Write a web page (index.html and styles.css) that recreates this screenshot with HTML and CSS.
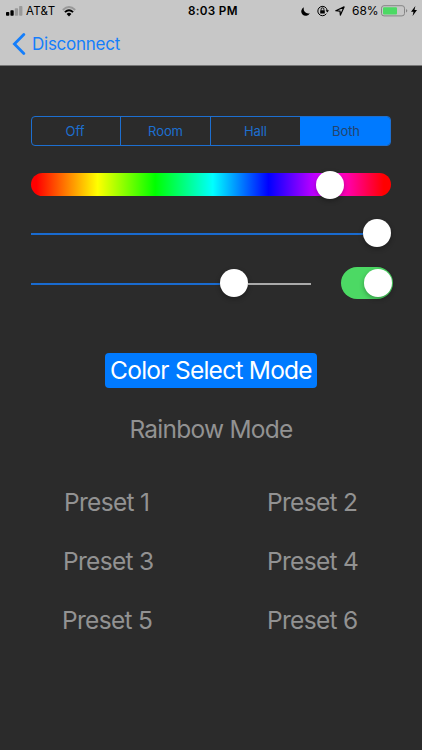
FILE: index.html
```html
<!DOCTYPE html>
<html lang="en">
<head>
<meta charset="utf-8">
<meta name="viewport" content="width=device-width, initial-scale=1">
<title>Light Controller</title>
<link rel="stylesheet" href="styles.css">
</head>
<body>
<div class="screen">
  <header class="header">
    <div class="status">
      <div class="status-left">
        <svg class="signal" width="17" height="10" viewBox="0 0 17 10"><rect x="0" y="6" width="3.3" height="3.8" rx=".8"/><rect x="4.4" y="4.3" width="3.3" height="5.5" rx=".8"/><g fill="#999"><rect x="8.8" y="2.2" width="3.3" height="7.6" rx=".8"/><rect x="13.1" y="0" width="3.3" height="9.8" rx=".8"/></g></svg>
        <span class="carrier">AT&amp;T</span>
        <svg class="wifi" width="14" height="11" viewBox="0 0 14 11" fill="none" stroke-width="1.8"><path d="M.8 4Q7-1.9 13.2 4" stroke="#999"/><path d="M2.9 6.2Q7 2.3 11.1 6.2" stroke="#000"/><path d="M4.6 7.9Q7 5.8 9.4 7.9L7 10.4Z" fill="#000"/></svg>
      </div>
      <span class="time">8:03 PM</span>
      <div class="status-right">
        <svg class="moon" width="9" height="9" viewBox="0 0 10 10"><path d="M3.4.2A5 5 0 1 0 9.8 7 5.1 5.1 0 0 1 3.4.2Z"/></svg>
        <svg class="lock" width="12" height="12" viewBox="0 0 12 12"><path d="M9.4 8.7A4.7 4.7 0 1 1 10.2 5.6" fill="none" stroke="#000"/><path d="M8.6 5.3H12L10.3 7.6Z"/><rect x="3.2" y="5.2" width="4.6" height="3.4" rx=".4"/><path d="M4.1 5.4V4.2a1.4 1.4 0 0 1 2.8 0V5.4" fill="none" stroke="#000" stroke-width=".9"/></svg>
        <svg class="arrow" width="10" height="10" viewBox="0 0 10 10"><path d="M.8 4.7L9.1.9 5.4 9.1 5 5.1Z" fill="none" stroke="#000" stroke-width="1.2" stroke-linejoin="round"/></svg>
        <span class="percent">68%</span>
        <svg class="battery" width="27" height="12" viewBox="0 0 27 12"><rect x=".5" y=".7" width="23" height="10.2" rx="2.5" fill="none" stroke="#858585"/><rect x="2" y="2.2" width="14" height="7.2" rx="1" fill="#4cd964"/><path d="M25 4q1.3.5 1.3 1.8T25 7.6Z" fill="#858585"/></svg>
        <svg class="bolt" width="6" height="10" viewBox="0 0 6 10"><path d="M4.4 0L0 5.7H2.5L1.6 10 6 4.1H3.5Z"/></svg>
      </div>
    </div>
    <nav class="nav">
      <svg class="chevron" width="14" height="22" viewBox="0 0 14 22"><path d="M11.8 1.6L2.4 11 11.8 20.4" fill="none" stroke="#147efb" stroke-width="2.8" stroke-linecap="round"/></svg>
      <span class="back">Disconnect</span>
    </nav>
  </header>
  <main class="controls">
    <div class="segments">
      <span class="segment">Off</span><span class="segment">Room</span><span class="segment">Hall</span><span class="segment segment-on">Both</span>
    </div>
    <div class="hue"><i class="knob hue-knob"></i></div>
    <div class="slider brightness"><i class="fill"></i><i class="knob"></i></div>
    <div class="speed-row">
      <div class="slider speed"><i class="fill"></i><i class="knob"></i><i class="rest"></i></div>
      <div class="switch"><i class="knob"></i></div>
    </div>
    <div class="modes">
      <span class="mode mode-on">Color Select Mode</span>
      <span class="mode">Rainbow Mode</span>
    </div>
    <div class="presets">
      <div class="column column-left"><span>Preset 1</span><span>Preset 3</span><span>Preset 5</span></div>
      <div class="column column-right"><span>Preset 2</span><span>Preset 4</span><span>Preset 6</span></div>
    </div>
  </main>
</div>
</body>
</html>
```
FILE: styles.css
```css
* { box-sizing: border-box; }
body { margin: 0; background: #2b2b2b; font-family: Inter, "Liberation Sans", sans-serif; }
svg { display: block; flex: none; }
.screen { width: 422px; height: 750px; overflow: hidden; background: #2b2b2b; }
.header { height: 66px; background: #c7c7c7; border-bottom: 1px solid #777; color: #000; }
.status { height: 22px; display: grid; grid-template-columns: 188px 50px 1fr; align-items: center; font-size: 11.5px; line-height: 22px; }
.status-left { display: flex; align-items: center; padding-left: 6px; }
.carrier { margin-left: 3px; width: 30px; white-space: nowrap; letter-spacing: .3px; }
.wifi { margin-left: 6px; }
.time { font-weight: 600; font-size: 11.7px; letter-spacing: .3px; white-space: nowrap; }
.status-right { display: flex; align-items: center; justify-content: flex-end; padding-right: 5px; }
.lock { margin-left: 7px; }
.arrow { margin-left: 6px; }
.percent { margin-left: 7px; width: 26px; white-space: nowrap; font-size: 12px; }
.battery { margin-left: 3px; }
.bolt { margin-left: 3px; }
.nav { height: 43px; display: flex; align-items: center; padding-left: 12px; color: #147efb; }
.back { margin-left: 6px; font-size: 17px; letter-spacing: -.25px; }
.controls { padding: 50px 31px 0; display: flex; flex-direction: column; }
.segments { width: 360px; height: 30px; display: grid; grid-template-columns: 89px 90px 90px 89px; border: 1px solid #1d6fd0; border-radius: 4px; overflow: hidden; }
.segment { display: flex; align-items: center; justify-content: center; color: #1d6fd0; font-size: 13px; letter-spacing: -.1px; border-right: 1px solid #1d6fd0; }
.segment:first-child { padding-right: 2px; }
.segment-on { background: #007aff; color: #23446e; border: 0; margin: -1px; padding-left: 1px; }
.knob { display: block; flex: none; width: 28px; height: 28px; border-radius: 50%; background: #fff; box-shadow: 0 2px 5px rgba(0,0,0,.3); }
.hue { width: 360px; height: 23px; margin-top: 27px; border-radius: 12px; display: flex; align-items: center; padding-left: 284.5px; background: linear-gradient(90deg, #f00 0, #f00 1.5%, #ff0 18.5%, #0f0 34.5%, #0ff 50.5%, #00f 66%, #f0f 83%, #f00 98%); }
.slider { height: 28px; display: flex; align-items: center; }
.fill, .rest { height: 2px; margin-top: 2px; flex: 1; background: #196bd0; }
.brightness { width: 360px; margin-top: 23px; }
.speed-row { display: flex; align-items: center; justify-content: space-between; width: 362px; height: 32px; margin-top: 20px; }
.speed { width: 280px; }
.speed .fill { flex: 0 0 189px; }
.rest { background: #aaa; }
.switch { width: 52px; height: 32px; border-radius: 16px; background: #4cd964; display: flex; align-items: center; justify-content: flex-end; padding-right: 1.5px; }
.modes { display: flex; flex-direction: column; align-items: center; margin-top: 54px; gap: 24px; }
.mode { height: 35px; line-height: 34px; font-size: 24.5px; letter-spacing: -.75px; color: #929292; white-space: nowrap; }
.mode-on { width: 212px; border-radius: 4px; text-align: center; background: #007aff; color: #fff; }
.presets { display: flex; margin-top: 37px; color: #929292; font-size: 24.5px; letter-spacing: -.7px; line-height: 37px; }
.column { display: flex; flex-direction: column; gap: 22px; width: 90px; white-space: nowrap; }
.column-left { margin-left: 32px; }
.column-left span:first-child { padding-left: 1px; }
.column-left span:last-child { margin-left: -1px; }
.column-right { margin-left: 114px; }
```
